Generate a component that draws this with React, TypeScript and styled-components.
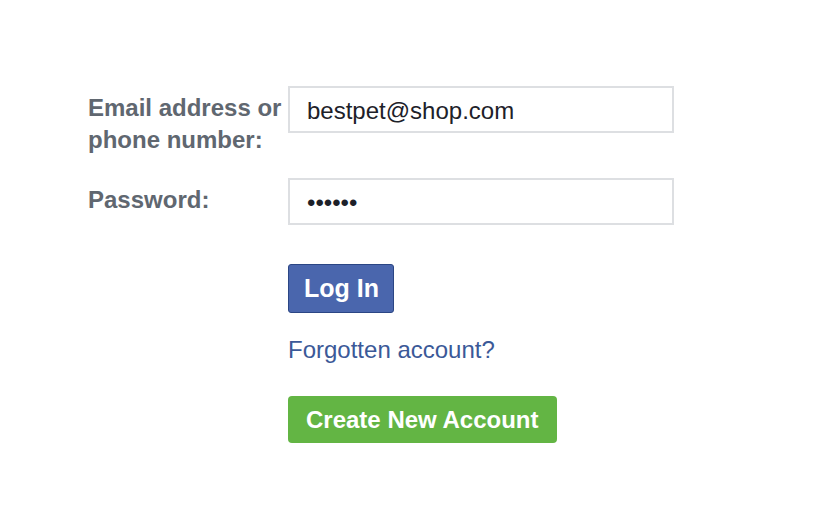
import React from "react";
import styled, { createGlobalStyle } from "styled-components";

const GlobalStyle = createGlobalStyle`
  html, body {
    margin: 0;
    padding: 0;
    background: #ffffff;
  }
  body {
    font-family: "Liberation Sans", Arial, Helvetica, sans-serif;
  }
`;

const Page = styled.div`
  width: 820px;
  height: 508px;
  box-sizing: border-box;
  padding: 86px 0 0 88px;
  background: #ffffff;
`;

const Form = styled.form`
  display: flex;
  flex-direction: column;
  margin: 0;
`;

const Row = styled.div<{ $gap: number }>`
  display: flex;
  align-items: flex-start;
  margin-bottom: ${(p) => p.$gap}px;
`;

const Label = styled.label`
  width: 200px;
  flex: none;
  box-sizing: border-box;
  padding-top: 6px;
  color: #606770;
  font-size: 24px;
  font-weight: bold;
  line-height: 32px;
`;

const Input = styled.input`
  width: 386px;
  height: 47px;
  box-sizing: border-box;
  margin: 0;
  border: 2px solid #dddfe2;
  border-radius: 0;
  padding: 2px 0 0 17px;
  background: #ffffff;
  color: #1d2129;
  font-family: "Liberation Sans", Arial, Helvetica, sans-serif;
  font-size: 24px;
  outline: none;
`;

const Actions = styled.div`
  display: flex;
  flex-direction: column;
  align-items: flex-start;
  padding-left: 200px;
`;

const LoginButton = styled.button`
  height: 49px;
  box-sizing: border-box;
  margin: 0;
  padding: 0 14px 0 15px;
  border: 1px solid #2b4684;
  border-radius: 3px;
  background: #4a66ad;
  color: #ffffff;
  font-family: "Liberation Sans", Arial, Helvetica, sans-serif;
  font-size: 25px;
  font-weight: bold;
  line-height: 47px;
  cursor: pointer;
`;

const ForgotLink = styled.a`
  margin-top: 23px;
  color: #3b5998;
  font-size: 24px;
  line-height: 28px;
  text-decoration: none;
`;

const CreateButton = styled.button`
  height: 47px;
  box-sizing: border-box;
  margin: 32px 0 0;
  padding: 0 18px;
  border: none;
  border-radius: 4px;
  background: #63b544;
  color: #ffffff;
  font-family: "Liberation Sans", Arial, Helvetica, sans-serif;
  font-size: 24px;
  font-weight: bold;
  line-height: 47px;
  cursor: pointer;
`;

export default function App() {
  return (
    <>
      <GlobalStyle />
      <Page>
        <Form onSubmit={(e) => e.preventDefault()}>
          <Row $gap={22}>
            <Label htmlFor="email">
              Email address or
              <br />
              phone number:
            </Label>
            <Input id="email" type="text" defaultValue="bestpet@shop.com" />
          </Row>
          <Row $gap={39}>
            <Label htmlFor="pass">Password:</Label>
            <Input id="pass" type="password" defaultValue="123456" />
          </Row>
          <Actions>
            <LoginButton type="submit">Log In</LoginButton>
            <ForgotLink href="#">Forgotten account?</ForgotLink>
            <CreateButton type="button">Create New Account</CreateButton>
          </Actions>
        </Form>
      </Page>
    </>
  );
}
